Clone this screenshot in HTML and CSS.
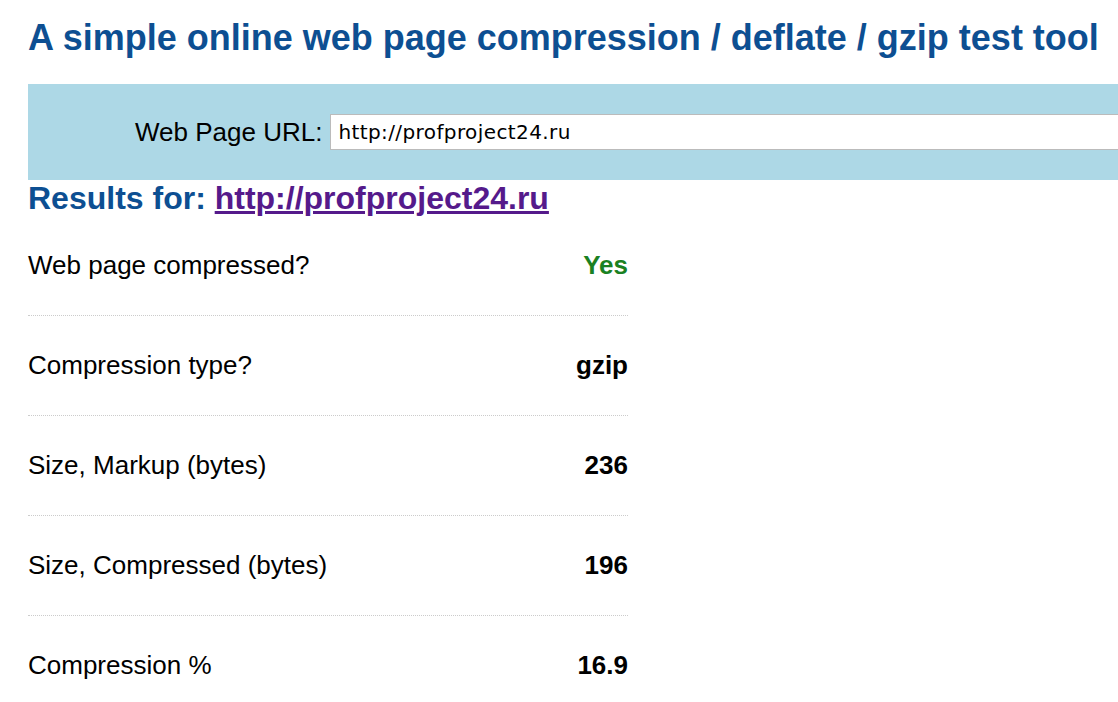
FILE: index.html
```html
<!DOCTYPE html>
<html>
<head>
  <meta charset="UTF-8">
  <title>Web page compression test</title>
  <link rel="stylesheet" href="styles.css">
</head>
<body>
  <h1>A simple online web page compression / deflate / gzip test tool</h1>

  <!-- URL form -->
  <form class="url-form">
    <label for="url">Web Page URL:</label>
    <input type="text" id="url" value="http://profproject24.ru">
  </form>

  <h2>Results for: <a href="http://profproject24.ru">http://profproject24.ru</a></h2>

  <!-- Results -->
  <div class="results">
    <div class="row">
      <span>Web page compressed?</span>
      <span class="value yes">Yes</span>
    </div>
    <div class="row">
      <span>Compression type?</span>
      <span class="value">gzip</span>
    </div>
    <div class="row">
      <span>Size, Markup (bytes)</span>
      <span class="value">236</span>
    </div>
    <div class="row">
      <span>Size, Compressed (bytes)</span>
      <span class="value">196</span>
    </div>
    <div class="row">
      <span>Compression %</span>
      <span class="value">16.9</span>
    </div>
  </div>
</body>
</html>
```

FILE: styles.css
```css
body {
  font-family: "Liberation Sans", Arial, sans-serif;
  margin: 0;
  padding: 0 0 0 28px;
  color: #000;
  background: #fff;
  overflow: hidden;
}

h1 {
  color: #0d4f92;
  font-size: 36px;
  margin: 18px 0 0;
  line-height: 40px;
  white-space: nowrap;
}

  /*URL form*/
.url-form {
  background-color: #add8e6;
  margin: 26px 0 0;
  height: 96px;
  display: flex;
  align-items: center;
  padding-left: 107px;
}

.url-form label {
  font-size: 26px;
  margin-right: 8px;
}

.url-form input {
  flex: 1;
  height: 36px;
  box-sizing: border-box;
  border: 1px solid #bbb;
  padding: 0 7px;
  font-family: "DejaVu Sans", Verdana, sans-serif;
  font-size: 20px;
  letter-spacing: 0.4px;
  margin-right: -10px;
}

h2 {
  color: #0d4f92;
  font-size: 32px;
  margin: 0;
  line-height: 36px;
}

h2 a {
  color: #551a8b;
}

  /*Results*/
.results {
  width: 600px;
}

.row {
  display: flex;
  justify-content: space-between;
  align-items: center;
  height: 100px;
  font-size: 26px;
  border-bottom: 1px dotted #ccc;
  box-sizing: border-box;
}

.value {
  font-weight: bold;
}

.yes {
  color: #1a8122;
}
```
